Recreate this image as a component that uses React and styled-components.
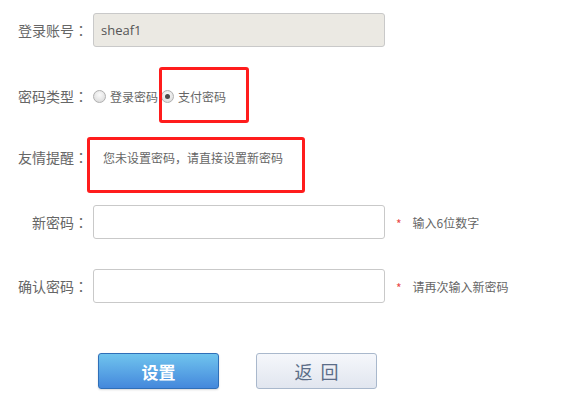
import styled, { createGlobalStyle } from 'styled-components';

const GlobalStyle = createGlobalStyle`
  html, body {
    margin: 0;
    padding: 0;
    background: #fff;
  }
  body {
    font-family: "Noto Sans CJK SC", "Liberation Sans", sans-serif;
  }
`;

const Form = styled.div`
  position: relative;
  width: 588px;
  height: 402px;
  padding-top: 13px;
  box-sizing: border-box;
`;

const Row = styled.div`
  display: flex;
  align-items: center;
  height: 34px;
  margin-top: ${(p) => p.$top || 0}px;
`;

const Label = styled.div`
  width: 88px;
  flex: none;
  text-align: right;
  font-size: 14px;
  color: #666;
  margin-right: 5px;
`;

// centred full-width colon, as in the original font
const Colon = styled.span`
  font-family: "Noto Sans CJK JP", "Noto Sans CJK SC", sans-serif;
`;

const Input = styled.div`
  width: 292px;
  height: 34px;
  box-sizing: border-box;
  border: 1px solid #c9c9c9;
  border-radius: 3px;
  background: ${(p) => (p.$disabled ? '#ebe9e3' : '#fff')};
  display: flex;
  align-items: center;
  padding-left: 7px;
  font-family: "Open Sans", "Noto Sans CJK SC", sans-serif;
  font-size: 13px;
  color: #555;
`;

const RadioGroup = styled.div`
  display: flex;
  align-items: center;
`;

const Radio = styled.span`
  width: 13px;
  height: 13px;
  box-sizing: border-box;
  border-radius: 50%;
  border: 1px solid #b0b0b0;
  background: radial-gradient(circle at 50% 35%, #fafafa 0%, #d6d6d6 100%);
  display: inline-flex;
  align-items: center;
  justify-content: center;
  margin-right: 4px;
  margin-left: ${(p) => p.$gap || 0}px;

  &::after {
    content: "";
    width: 5px;
    height: 5px;
    border-radius: 50%;
    background: ${(p) => (p.$checked ? '#4a4a4a' : 'transparent')};
  }
`;

const RadioText = styled.span`
  font-size: 12px;
  color: #666;
`;

const Notice = styled.div`
  font-size: 12px;
  color: #666;
  padding-left: 10px;
`;

const Star = styled.span`
  color: #e94a4a;
  font-size: 12px;
  margin-left: 11px;
  margin-top: 2px;
`;

const Hint = styled.span`
  font-size: 12px;
  color: #666;
  margin-left: 11px;
`;

const Buttons = styled.div`
  display: flex;
  gap: 37px;
  padding-left: 98px;
  margin-top: 50px;
`;

const Button = styled.button`
  width: 121px;
  height: 36px;
  border-radius: 3px;
  font-family: "Noto Sans CJK SC", sans-serif;
  cursor: pointer;
  padding: 0;
  ${(p) =>
    p.$primary
      ? `
    border: 1px solid #2f6fb8;
    background: linear-gradient(#70c4ee, #4488dc);
    color: #fff;
    font-size: 17px;
    font-weight: bold;
    box-shadow: 0 1px 2px rgba(0,0,0,0.15);
  `
      : `
    border: 1px solid #a9b8cc;
    background: linear-gradient(#f5f7fb, #e1e6ef);
    color: #5b6d88;
    font-size: 18px;
    letter-spacing: 8px;
    text-indent: 8px;
  `}
`;

const Mark = styled.div`
  position: absolute;
  box-sizing: border-box;
  border: 3px solid #ff1c1c;
  border-radius: 3px;
  pointer-events: none;
`;

export default function App() {
  return (
    <>
      <GlobalStyle />
      <Form>
        <Row>
          <Label>登录账号<Colon>：</Colon></Label>
          <Input $disabled>sheaf1</Input>
        </Row>
        <Row $top={32}>
          <Label>密码类型<Colon>：</Colon></Label>
          <RadioGroup>
            <Radio />
            <RadioText>登录密码</RadioText>
            <Radio $checked $gap={3} />
            <RadioText>支付密码</RadioText>
          </RadioGroup>
        </Row>
        <Row $top={27}>
          <Label>友情提醒<Colon>：</Colon></Label>
          <Notice>您未设置密码，请直接设置新密码</Notice>
        </Row>
        <Row $top={31}>
          <Label>新密码<Colon>：</Colon></Label>
          <Input />
          <Star>*</Star>
          <Hint>输入6位数字</Hint>
        </Row>
        <Row $top={30}>
          <Label>确认密码<Colon>：</Colon></Label>
          <Input />
          <Star>*</Star>
          <Hint>请再次输入新密码</Hint>
        </Row>
        <Buttons>
          <Button $primary>设置</Button>
          <Button>返回</Button>
        </Buttons>
        <Mark style={{ left: 159, top: 67, width: 90, height: 56 }} />
        <Mark style={{ left: 87, top: 137, width: 218, height: 56 }} />
      </Form>
    </>
  );
}
